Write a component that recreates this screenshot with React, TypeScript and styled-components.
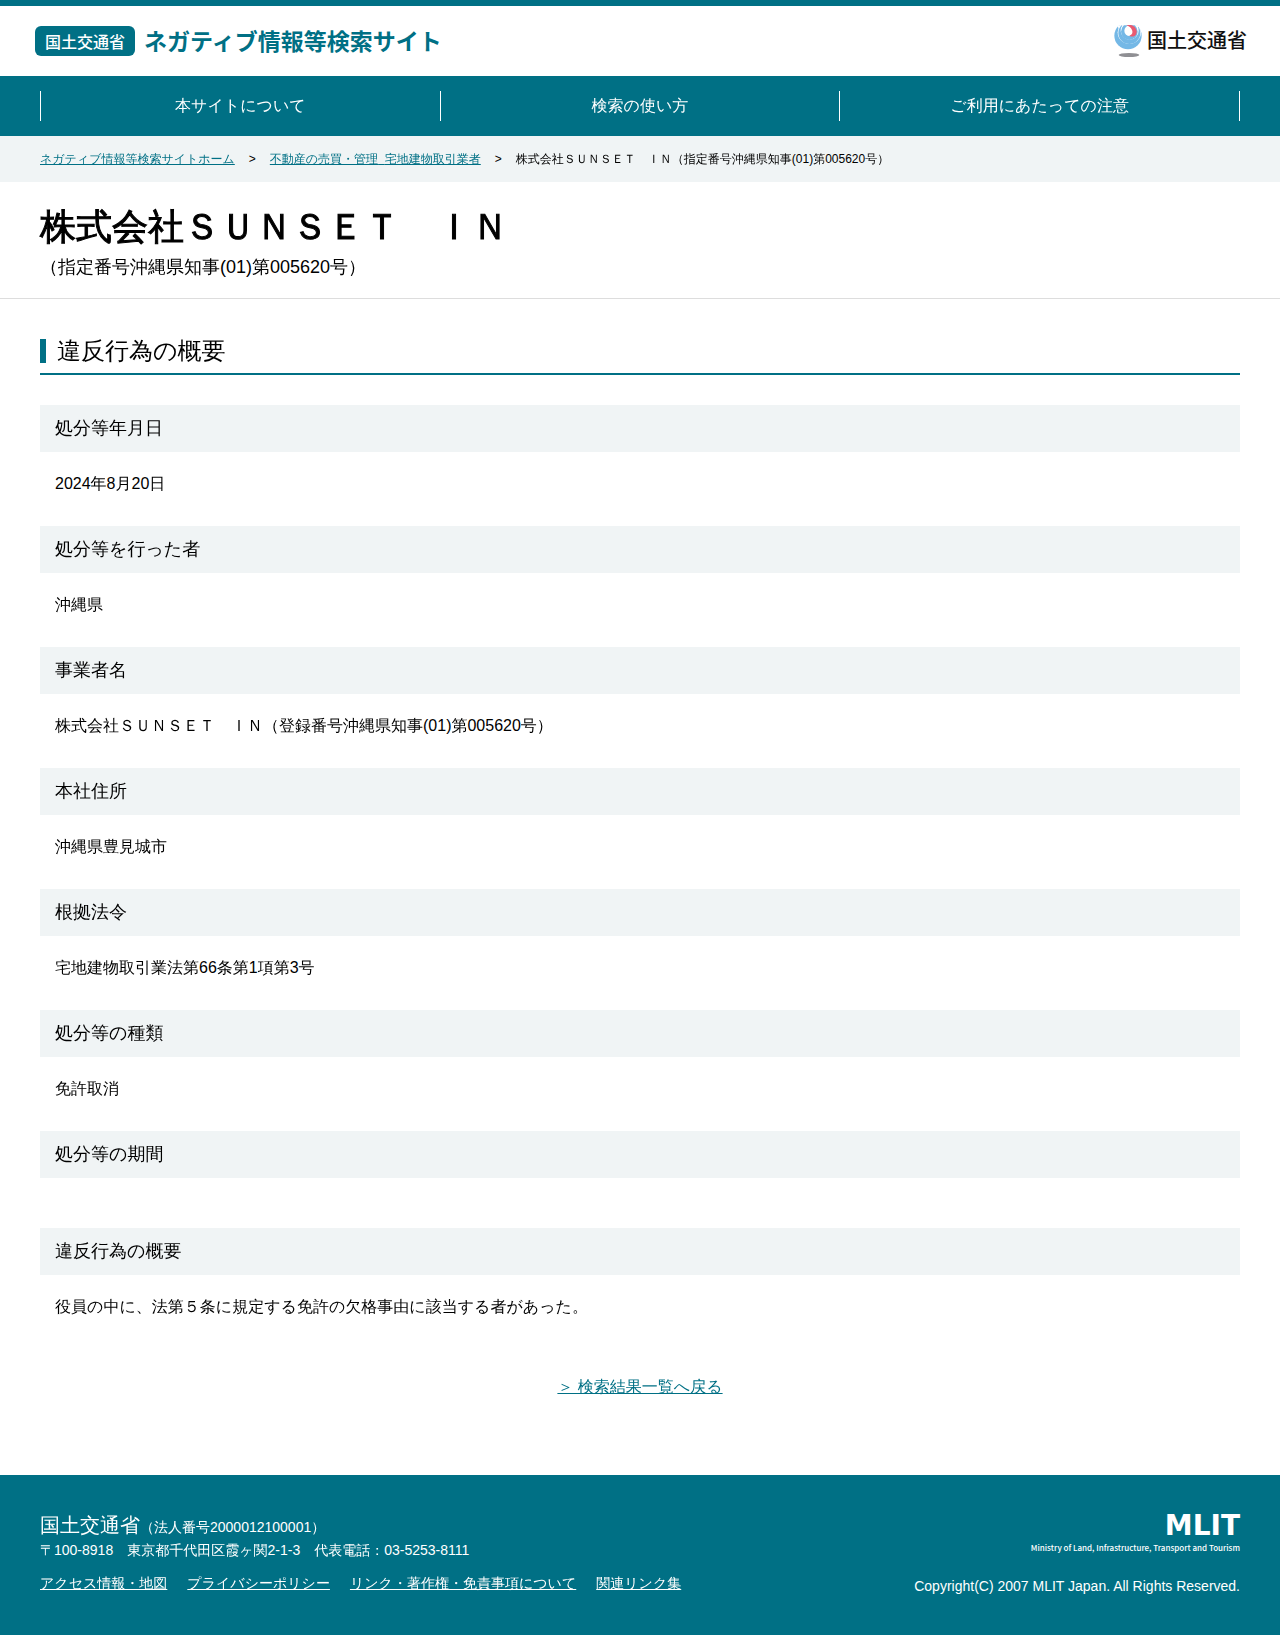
import React from "react";
import styled, { createGlobalStyle } from "styled-components";

const TEAL = "#007085";
const PALE = "#f0f4f5";
const BODY_FONT = `"Liberation Sans", "WenQuanYi Zen Hei", "Noto Sans CJK JP", sans-serif`;
const LOGO_FONT = `"Noto Sans CJK JP", "Noto Sans", sans-serif`;

const GlobalStyle = createGlobalStyle`
  *, *::before, *::after { box-sizing: border-box; }
  body {
    margin: 0;
    background: #fff;
    color: #000;
    font: 16px/24px ${BODY_FONT};
  }
  h1, h2, p, ul, ol, dl, dd { margin: 0; padding: 0; }
  ul, ol { list-style: none; }
`;

const Header = styled.header`
  display: flex;
  align-items: center;
  justify-content: space-between;
  height: 76px;
  padding: 0 33px 0 35px;
  border-top: 6px solid ${TEAL};
`;

const SiteLogo = styled.a`
  display: flex;
  align-items: center;
  gap: 9px;
  color: ${TEAL};
  font: 700 23px/30px ${LOGO_FONT};
  text-decoration: none;
`;

const SiteName = styled.span`
  padding-bottom: 2px;
`;

const Badge = styled.span`
  padding: 0 10px;
  border-radius: 6px;
  background: ${TEAL};
  color: #fff;
  font-size: 16px;
  font-weight: 500;
`;

const MinistryLogo = styled.a`
  display: flex;
  align-items: center;
  gap: 5px;
  color: #111;
  font: 500 20px/28px ${LOGO_FONT};
  text-decoration: none;
`;

const Nav = styled.nav`
  padding: 15px 40px;
  background: ${TEAL};
`;

const NavList = styled.ul`
  display: grid;
  grid-template-columns: repeat(3, 1fr);
  border-left: 1px solid #fff;
`;

const NavItem = styled.li`
  border-right: 1px solid #fff;
`;

const NavLink = styled.a`
  display: block;
  color: #fff;
  line-height: 30px;
  text-align: center;
  text-decoration: none;
`;

const Breadcrumb = styled.ol`
  display: flex;
  flex-wrap: wrap;
  && {
    padding: 14px 40px;
  }
  background: ${PALE};
  font-size: 12px;
  line-height: 18px;
`;

const Crumb = styled.li`
  & + &::before {
    content: ">";
    margin: 0 14px;
  }
`;

const TextLink = styled.a`
  color: ${TEAL};
  text-decoration: underline;
`;

const TitleArea = styled.div`
  padding: 18px 40px 17px;
  border-bottom: 1px solid #ddd;
`;

const Title = styled.h1`
  font-size: 36px;
  font-weight: 400;
  line-height: 54px;
  -webkit-text-stroke: 1px #000;
`;

const Subtitle = styled.p`
  font-size: 18px;
  line-height: 27px;
`;

const Main = styled.main`
  padding: 40px 40px 76px;
`;

const SectionHeading = styled.h2`
  display: flex;
  align-items: center;
  gap: 11px;
  && {
    margin-bottom: 30px;
    padding-bottom: 10px;
  }
  border-bottom: 2px solid ${TEAL};
  font-size: 24px;
  font-weight: 400;
  line-height: 24px;

  &::before {
    content: "";
    width: 6px;
    height: 24px;
    background: ${TEAL};
  }
`;

const Term = styled.dt`
  padding: 10px 15px;
  background: ${PALE};
  font-size: 18px;
  line-height: 27px;
`;

const Detail = styled.dd`
  && {
    padding: 20px 15px 30px;
  }
`;

const BackRow = styled.p`
  && {
    padding-top: 26px;
  }
  text-align: center;
`;

const Footer = styled.footer`
  display: flex;
  justify-content: space-between;
  padding: 37px 40px 38px;
  background: ${TEAL};
  color: #fff;
  font-size: 14px;
  line-height: 21px;
`;

const FooterName = styled.p`
  line-height: 26px;
`;

const Large = styled.span`
  font-size: 20px;
`;

const FooterLinks = styled.ul`
  display: flex;
  flex-wrap: wrap;
  gap: 20px;
  && {
    padding-top: 12px;
  }
`;

const FooterLink = styled.a`
  color: #fff;
`;

const FooterRight = styled.div`
  display: flex;
  flex-direction: column;
  align-items: flex-end;
`;

const Wordmark = styled.p`
  font: 700 28px/28px "DejaVu Sans", sans-serif;
`;

const WordmarkCaption = styled.p`
  && {
    margin-bottom: 20px;
  }
  font: 500 8px/16px ${LOGO_FONT};
`;

const details = [
  { term: "処分等年月日", text: "2024年8月20日" },
  { term: "処分等を行った者", text: "沖縄県" },
  { term: "事業者名", text: "株式会社ＳＵＮＳＥＴ　ＩＮ（登録番号沖縄県知事(01)第005620号）" },
  { term: "本社住所", text: "沖縄県豊見城市" },
  { term: "根拠法令", text: "宅地建物取引業法第66条第1項第3号" },
  { term: "処分等の種類", text: "免許取消" },
  { term: "処分等の期間", text: "" },
  { term: "違反行為の概要", text: "役員の中に、法第５条に規定する免許の欠格事由に該当する者があった。" },
];

const navItems = ["本サイトについて", "検索の使い方", "ご利用にあたっての注意"];
const footerLinks = ["アクセス情報・地図", "プライバシーポリシー", "リンク・著作権・免責事項について", "関連リンク集"];

const Emblem = () => (
  <svg width="28" height="32" viewBox="0 0 84 96" aria-hidden="true">
    <clipPath id="globe">
      <rect x="0" y="1" width="84" height="74" />
    </clipPath>
    <g clipPath="url(#globe)">
      <circle cx="42" cy="32" r="41" fill="#74b8e6" />
      <circle cx="46" cy="22" r="35" fill="#fff" />
      <path d="M12 -4H76V8H12Z" fill="#fff" />
      <circle cx="46" cy="24" r="33" fill="#74b8e6" />
      <circle cx="47" cy="17" r="27" fill="#fff" />
      <path d="M24 -8H74V6H24Z" fill="#fff" />
      <circle cx="46" cy="20" r="25" fill="#74b8e6" />
      <circle cx="47" cy="17" r="16" fill="#fff" />
    </g>
    <path d="M37 1C54 -5 70 8 68 23C66 34 54 38 46 32C55 29 57 22 54 15C51 8 45 4 37 1Z" fill="#ea5a70" />
    <ellipse cx="45" cy="90" rx="31" ry="6" fill="#8f8f93" />
  </svg>
);

export default function App() {
  return (
    <>
      <GlobalStyle />
      <Header>
        <SiteLogo href="#">
          <Badge>国土交通省</Badge>
          <SiteName>ネガティブ情報等検索サイト</SiteName>
        </SiteLogo>
        <MinistryLogo href="#">
          <Emblem />
          <SiteName>国土交通省</SiteName>
        </MinistryLogo>
      </Header>
      <Nav>
        <NavList>
          {navItems.map((label) => (
            <NavItem key={label}>
              <NavLink href="#">{label}</NavLink>
            </NavItem>
          ))}
        </NavList>
      </Nav>
      <Breadcrumb>
        <Crumb>
          <TextLink href="#">ネガティブ情報等検索サイトホーム</TextLink>
        </Crumb>
        <Crumb>
          <TextLink href="#">不動産の売買・管理{"\u00a0\u00a0"}宅地建物取引業者</TextLink>
        </Crumb>
        <Crumb>株式会社ＳＵＮＳＥＴ　ＩＮ（指定番号沖縄県知事(01)第005620号）</Crumb>
      </Breadcrumb>
      <TitleArea>
        <Title>株式会社ＳＵＮＳＥＴ　ＩＮ</Title>
        <Subtitle>（指定番号沖縄県知事(01)第005620号）</Subtitle>
      </TitleArea>
      <Main>
        <SectionHeading>違反行為の概要</SectionHeading>
        <dl>
          {details.map(({ term, text }) => (
            <React.Fragment key={term}>
              <Term>{term}</Term>
              <Detail>{text}</Detail>
            </React.Fragment>
          ))}
        </dl>
        <BackRow>
          <TextLink href="#">＞ 検索結果一覧へ戻る</TextLink>
        </BackRow>
      </Main>
      <Footer>
        <div>
          <FooterName>
            <Large>国土交通省</Large>（法人番号2000012100001）
          </FooterName>
          <p>〒100-8918　東京都千代田区霞ヶ関2-1-3　代表電話：03-5253-8111</p>
          <FooterLinks>
            {footerLinks.map((label) => (
              <li key={label}>
                <FooterLink href="#">{label}</FooterLink>
              </li>
            ))}
          </FooterLinks>
        </div>
        <FooterRight>
          <Wordmark>MLIT</Wordmark>
          <WordmarkCaption>Ministry of Land, Infrastructure, Transport and Tourism</WordmarkCaption>
          <p>Copyright(C) 2007 MLIT Japan. All Rights Reserved.</p>
        </FooterRight>
      </Footer>
    </>
  );
}
